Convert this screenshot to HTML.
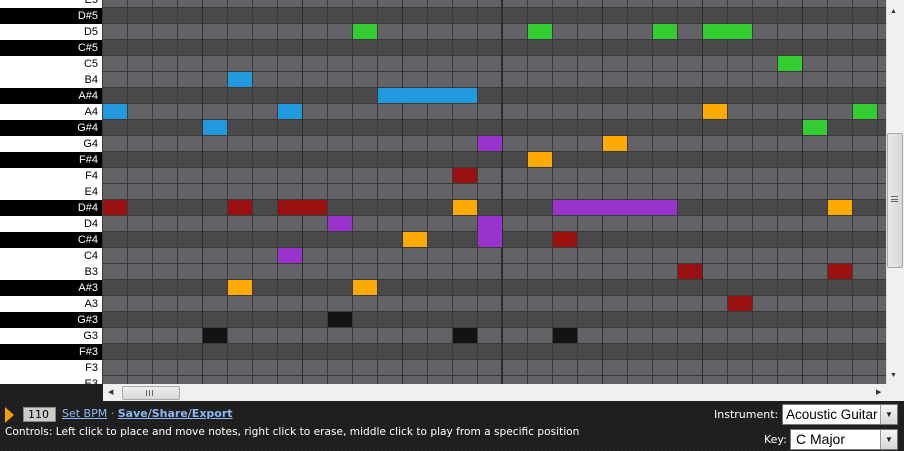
<!DOCTYPE html>
<html><head><meta charset="utf-8"><style>
*{margin:0;padding:0;box-sizing:border-box}
body{width:904px;height:451px;overflow:hidden;background:#1e1e1e;background-image:radial-gradient(#2a2a2a 0.7px,transparent 0.8px);background-size:4px 4px;position:relative;font-family:"Liberation Sans",sans-serif}
.k{position:absolute;left:0;width:103px;height:16px;font-size:11px;line-height:16px;text-align:right;padding-right:5px}
.w{background:#fff;color:#000}
.b{background:#000;color:#fff}
.r{position:absolute;left:103px;width:783px;height:16px;border-top:1px solid #3a3a3a}
.rl{background:#636367}
.rd{background:#49494b}
#vl{position:absolute;left:102px;top:0;width:784px;height:384px;background:repeating-linear-gradient(90deg,#3a3a3a 0,#3a3a3a 1px,transparent 1px,transparent 25px)}
.bar{position:absolute;top:0;width:1px;height:384px;background:#2e2e2e}
.n{position:absolute;width:24px;height:15px}
.g{background:#33cc33}.bl{background:#2299dd}.o{background:#ffaa00}.p{background:#9933cc}.re{background:#991111}.bk{background:#131313}
</style></head><body>
<div class="k w" style="top:-8px">E5</div>
<div class="k b" style="top:8px">D#5</div>
<div class="k w" style="top:24px">D5</div>
<div class="k b" style="top:40px">C#5</div>
<div class="k w" style="top:56px">C5</div>
<div class="k w" style="top:72px">B4</div>
<div class="k b" style="top:88px">A#4</div>
<div class="k w" style="top:104px">A4</div>
<div class="k b" style="top:120px">G#4</div>
<div class="k w" style="top:136px">G4</div>
<div class="k b" style="top:152px">F#4</div>
<div class="k w" style="top:168px">F4</div>
<div class="k w" style="top:184px">E4</div>
<div class="k b" style="top:200px">D#4</div>
<div class="k w" style="top:216px">D4</div>
<div class="k b" style="top:232px">C#4</div>
<div class="k w" style="top:248px">C4</div>
<div class="k w" style="top:264px">B3</div>
<div class="k b" style="top:280px">A#3</div>
<div class="k w" style="top:296px">A3</div>
<div class="k b" style="top:312px">G#3</div>
<div class="k w" style="top:328px">G3</div>
<div class="k b" style="top:344px">F#3</div>
<div class="k w" style="top:360px">F3</div>
<div class="k w" style="top:376px;height:8px;overflow:hidden">E3</div>

<div class="r rl" style="top:-9px"></div>
<div class="r rd" style="top:7px"></div>
<div class="r rl" style="top:23px"></div>
<div class="r rd" style="top:39px"></div>
<div class="r rl" style="top:55px"></div>
<div class="r rl" style="top:71px"></div>
<div class="r rd" style="top:87px"></div>
<div class="r rl" style="top:103px"></div>
<div class="r rd" style="top:119px"></div>
<div class="r rl" style="top:135px"></div>
<div class="r rd" style="top:151px"></div>
<div class="r rl" style="top:167px"></div>
<div class="r rl" style="top:183px"></div>
<div class="r rd" style="top:199px"></div>
<div class="r rl" style="top:215px"></div>
<div class="r rd" style="top:231px"></div>
<div class="r rl" style="top:247px"></div>
<div class="r rl" style="top:263px"></div>
<div class="r rd" style="top:279px"></div>
<div class="r rl" style="top:295px"></div>
<div class="r rd" style="top:311px"></div>
<div class="r rl" style="top:327px"></div>
<div class="r rd" style="top:343px"></div>
<div class="r rl" style="top:359px"></div>
<div class="r rl" style="top:375px;height:9px"></div>
<div id="vl"></div>
<div class="bar" style="left:202px"></div>
<div class="bar" style="left:302px"></div>
<div class="bar" style="left:402px"></div>
<div class="bar" style="left:501px;width:2px"></div>
<div class="bar" style="left:602px"></div>
<div class="bar" style="left:702px"></div>
<div class="bar" style="left:802px"></div>

<div class="n g" style="left:353px;top:24px"></div>
<div class="n g" style="left:528px;top:24px"></div>
<div class="n g" style="left:653px;top:24px"></div>
<div class="n g" style="left:703px;top:24px;width:49px"></div>
<div class="n g" style="left:778px;top:56px"></div>
<div class="n bl" style="left:228px;top:72px"></div>
<div class="n bl" style="left:378px;top:88px;width:99px"></div>
<div class="n bl" style="left:103px;top:104px"></div>
<div class="n bl" style="left:278px;top:104px"></div>
<div class="n o" style="left:703px;top:104px"></div>
<div class="n g" style="left:853px;top:104px"></div>
<div class="n bl" style="left:203px;top:120px"></div>
<div class="n g" style="left:803px;top:120px"></div>
<div class="n p" style="left:478px;top:136px"></div>
<div class="n o" style="left:603px;top:136px"></div>
<div class="n o" style="left:528px;top:152px"></div>
<div class="n re" style="left:453px;top:168px"></div>
<div class="n re" style="left:103px;top:200px"></div>
<div class="n re" style="left:228px;top:200px"></div>
<div class="n re" style="left:278px;top:200px;width:49px"></div>
<div class="n o" style="left:453px;top:200px"></div>
<div class="n p" style="left:553px;top:200px;width:124px"></div>
<div class="n o" style="left:828px;top:200px"></div>
<div class="n p" style="left:328px;top:216px"></div>
<div class="n p" style="left:478px;top:216px;height:31px"></div>
<div class="n o" style="left:403px;top:232px"></div>
<div class="n re" style="left:553px;top:232px"></div>
<div class="n p" style="left:278px;top:248px"></div>
<div class="n re" style="left:678px;top:264px"></div>
<div class="n re" style="left:828px;top:264px"></div>
<div class="n o" style="left:228px;top:280px"></div>
<div class="n o" style="left:353px;top:280px"></div>
<div class="n re" style="left:728px;top:296px"></div>
<div class="n bk" style="left:328px;top:312px"></div>
<div class="n bk" style="left:203px;top:328px"></div>
<div class="n bk" style="left:453px;top:328px"></div>
<div class="n bk" style="left:553px;top:328px"></div>

<div style="position:absolute;left:886px;top:0;width:18px;height:384px;background:#f0f0f0;border-left:1px solid #ddd"></div>
<div style="position:absolute;left:890px;top:8px;font-size:7px;color:#333">▲</div>
<div style="position:absolute;left:887px;top:133px;width:16px;height:135px;background:linear-gradient(90deg,#e8e8e8,#d8d8d8);border:1px solid #aaa;border-radius:2px"></div>
<div style="position:absolute;left:891px;top:196px;width:7px;height:6px;border-top:1px solid #666;border-bottom:1px solid #666"></div>
<div style="position:absolute;left:891px;top:199px;width:7px;height:1px;background:#666"></div>
<div style="position:absolute;left:890px;top:372px;font-size:7px;color:#333">▼</div>

<div style="position:absolute;left:103px;top:384px;width:801px;height:17px;background:#f0f0f0"></div>
<div style="position:absolute;left:108px;top:388px;font-size:7px;color:#333">◀</div>
<div style="position:absolute;left:122px;top:386px;width:58px;height:14px;background:linear-gradient(#eee,#d8d8d8);border:1px solid #aaa;border-radius:2px"></div>
<div style="position:absolute;left:146px;top:390px;width:7px;height:6px;border-left:1px solid #666;border-right:1px solid #666"></div>
<div style="position:absolute;left:149px;top:390px;width:1px;height:6px;background:#666"></div>
<div style="position:absolute;left:876px;top:388px;font-size:7px;color:#333">▶</div>

<div style="position:absolute;left:5px;top:407px;width:0;height:0;border-top:8px solid transparent;border-bottom:8px solid transparent;border-left:9px solid #f0a000"></div>
<div style="position:absolute;left:23px;top:407px;width:33px;height:15px;background:#ccc;border:1px solid #888;font-family:'DejaVu Sans',sans-serif;font-size:11px;line-height:13px;padding-left:4px;color:#000">110</div>
<div style="position:absolute;left:62px;top:407px;font-family:'DejaVu Sans',sans-serif;font-size:11px;color:#8fb8f0;white-space:nowrap"><span style="text-decoration:underline">Set BPM</span> <span style="color:#aaa">·</span> <b style="text-decoration:underline">Save/Share/Export</b></div>
<div style="position:absolute;left:5px;top:426px;font-family:'DejaVu Sans',sans-serif;font-size:10.6px;color:#fff;white-space:nowrap">Controls: Left click to place and move notes, right click to erase, middle click to play from a specific position</div>

<div style="position:absolute;left:714px;top:408px;font-family:'DejaVu Sans',sans-serif;font-size:11px;color:#fff">Instrument:</div>
<div style="position:absolute;left:782px;top:404px;width:116px;height:21px;background:#fff;border:1px solid #777;font-size:13.5px;line-height:19px;padding-left:3px;color:#000;white-space:nowrap;overflow:hidden">Acoustic Guitar</div>
<div style="position:absolute;left:880px;top:405px;width:17px;height:19px;background:linear-gradient(#f4f4f4,#d8d8d8);border-left:1px solid #999;font-size:8px;line-height:19px;text-align:center;color:#222">▼</div>
<div style="position:absolute;left:764px;top:433px;font-family:'DejaVu Sans',sans-serif;font-size:11px;color:#fff">Key:</div>
<div style="position:absolute;left:790px;top:429px;width:108px;height:21px;background:#fff;border:1px solid #777;font-size:14px;line-height:19px;padding-left:5px;color:#000">C Major</div>
<div style="position:absolute;left:880px;top:430px;width:17px;height:19px;background:linear-gradient(#f4f4f4,#d8d8d8);border-left:1px solid #999;font-size:8px;line-height:19px;text-align:center;color:#222">▼</div>
</body></html>
